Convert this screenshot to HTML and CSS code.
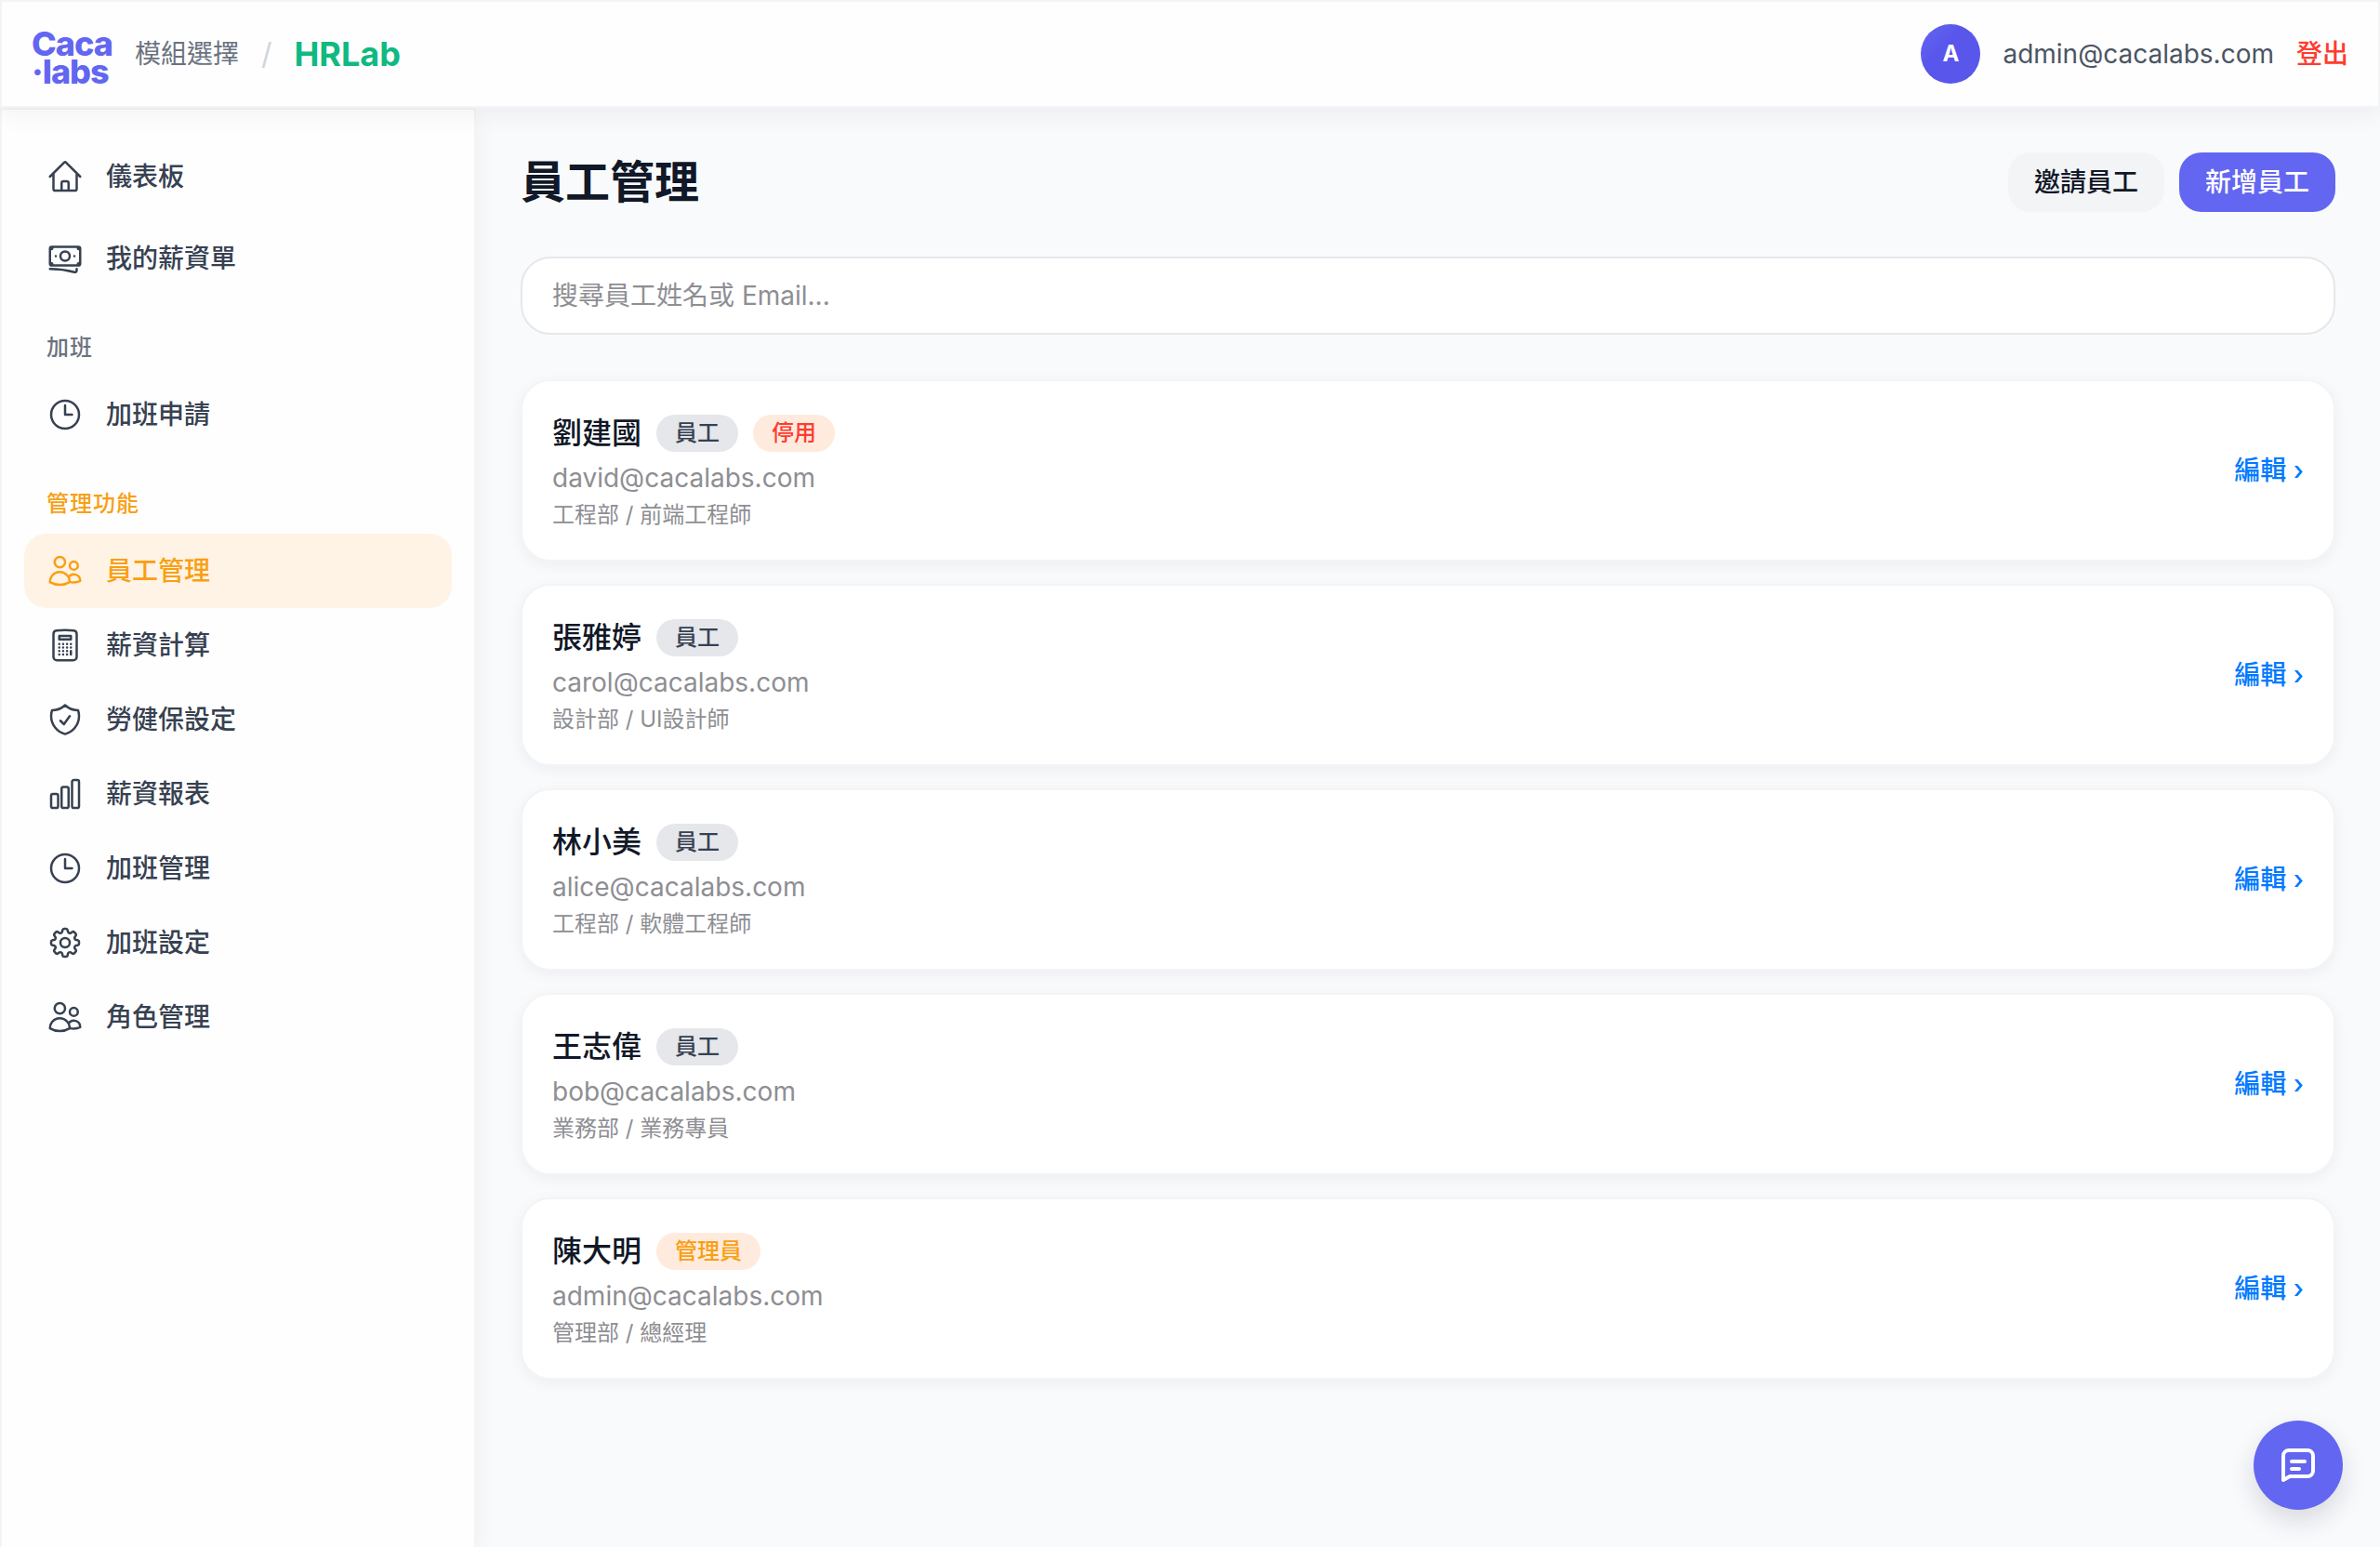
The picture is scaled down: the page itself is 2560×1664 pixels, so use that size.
FILE: index.html
```html
<!DOCTYPE html>
<html lang="zh-Hant">
<head>
<meta charset="utf-8">
<title>員工管理 - HRLab</title>
<link rel="stylesheet" href="styles.css">
</head>
<body>
<svg class="sprite" aria-hidden="true">
  <symbol id="home" viewBox="0 0 24 24"><path d="m2.25 12 8.954-8.955c.44-.439 1.152-.439 1.591 0L21.75 12M4.5 9.75v10.125c0 .621.504 1.125 1.125 1.125H9.75v-4.875c0-.621.504-1.125 1.125-1.125h2.25c.621 0 1.125.504 1.125 1.125V21h4.125c.621 0 1.125-.504 1.125-1.125V9.75M8.25 21h8.25"/></symbol>
  <symbol id="cash" viewBox="0 0 24 24"><path d="M2.25 18.75a60.07 60.07 0 0 1 15.797 2.101c.727.198 1.453-.342 1.453-1.096V18.75M3.75 4.5v.75A.75.75 0 0 1 3 6h-.75m0 0v-.375c0-.621.504-1.125 1.125-1.125H20.25M2.25 6v9m18-10.5v.75c0 .414.336.75.75.75h.75m-1.5-1.5h.375c.621 0 1.125.504 1.125 1.125v9.75c0 .621-.504 1.125-1.125 1.125h-.375m1.5-1.5H21a.75.75 0 0 0-.75.75v.75m0 0H3.75m0 0h-.375a1.125 1.125 0 0 1-1.125-1.125V15m1.5 1.5v-.75A.75.75 0 0 0 3 15h-.75M15 10.5a3 3 0 1 1-6 0 3 3 0 0 1 6 0Zm3 0h.008v.008H18V10.5Zm-12 0h.008v.008H6V10.5Z"/></symbol>
  <symbol id="clock" viewBox="0 0 24 24"><path d="M12 6v6h4.5m4.5 0a9 9 0 1 1-18 0 9 9 0 0 1 18 0Z"/></symbol>
  <symbol id="users" viewBox="0 0 24 24"><path d="M15 19.128a9.38 9.38 0 0 0 2.625.372 9.337 9.337 0 0 0 4.121-.952 4.125 4.125 0 0 0-7.533-2.493M15 19.128v-.003c0-1.113-.285-2.16-.786-3.07M15 19.128v.106A12.318 12.318 0 0 1 8.624 21c-2.331 0-4.512-.645-6.374-1.766l-.001-.109a6.375 6.375 0 0 1 11.964-3.07M12 6.375a3.375 3.375 0 1 1-6.75 0 3.375 3.375 0 0 1 6.75 0Zm8.25 2.25a2.625 2.625 0 1 1-5.25 0 2.625 2.625 0 0 1 5.25 0Z"/></symbol>
  <symbol id="calculator" viewBox="0 0 24 24"><path d="M15.75 15.75V18m-7.5-6.75h.008v.008H8.25v-.008Zm0 2.25h.008v.008H8.25V13.5Zm0 2.25h.008v.008H8.25v-.008Zm0 2.25h.008v.008H8.25V18Zm2.498-6.75h.007v.008h-.007v-.008Zm0 2.25h.007v.008h-.007V13.5Zm0 2.25h.007v.008h-.007v-.008Zm0 2.25h.007v.008h-.007V18Zm2.504-6.75h.008v.008h-.008v-.008Zm0 2.25h.008v.008h-.008V13.5Zm0 2.25h.008v.008h-.008v-.008Zm0 2.25h.008v.008h-.008V18Zm2.498-6.75h.008v.008h-.008v-.008Zm0 2.25h.008v.008h-.008V13.5ZM8.25 6h7.5v2.25h-7.5V6ZM12 2.25c-1.892 0-3.758.11-5.593.322C5.307 2.7 4.5 3.65 4.5 4.757V19.5a2.25 2.25 0 0 0 2.25 2.25h10.5a2.25 2.25 0 0 0 2.25-2.25V4.757c0-1.108-.806-2.057-1.907-2.185A48.507 48.507 0 0 0 12 2.25Z"/></symbol>
  <symbol id="shield" viewBox="0 0 24 24"><path d="M9 12.75 11.25 15 15 9.75m-3-7.036A11.959 11.959 0 0 1 3.598 6 11.99 11.99 0 0 0 3 9.749c0 5.592 3.824 10.29 9 11.623 5.176-1.332 9-6.03 9-11.622 0-1.31-.21-2.571-.598-3.751h-.152c-3.196 0-6.1-1.248-8.25-3.285Z"/></symbol>
  <symbol id="chart" viewBox="0 0 24 24"><path d="M3 13.125C3 12.504 3.504 12 4.125 12h2.25c.621 0 1.125.504 1.125 1.125v6.75C7.5 20.496 6.996 21 6.375 21h-2.25A1.125 1.125 0 0 1 3 19.875v-6.75ZM9.75 8.625c0-.621.504-1.125 1.125-1.125h2.25c.621 0 1.125.504 1.125 1.125v11.25c0 .621-.504 1.125-1.125 1.125h-2.25a1.125 1.125 0 0 1-1.125-1.125V8.625ZM16.5 4.125c0-.621.504-1.125 1.125-1.125h2.25C20.496 3 21 3.504 21 4.125v15.75c0 .621-.504 1.125-1.125 1.125h-2.25a1.125 1.125 0 0 1-1.125-1.125V4.125Z"/></symbol>
  <symbol id="gear" viewBox="0 0 24 24"><path d="M10.343 3.94c.09-.542.56-.94 1.11-.94h1.093c.55 0 1.02.398 1.11.94l.149.894c.07.424.384.764.78.93.398.164.855.142 1.205-.108l.737-.527a1.125 1.125 0 0 1 1.45.12l.773.774c.39.389.44 1.002.12 1.45l-.527.737c-.25.35-.272.806-.107 1.204.165.397.505.71.93.78l.893.15c.543.09.94.559.94 1.109v1.094c0 .55-.397 1.02-.94 1.11l-.894.149c-.424.07-.764.383-.929.78-.165.398-.143.854.107 1.204l.527.738c.32.447.269 1.06-.12 1.45l-.774.773a1.125 1.125 0 0 1-1.449.12l-.738-.527c-.35-.25-.806-.272-1.203-.107-.398.165-.71.505-.781.929l-.149.894c-.09.542-.56.94-1.11.94h-1.094c-.55 0-1.019-.398-1.11-.94l-.148-.894c-.071-.424-.384-.764-.781-.93-.398-.164-.854-.142-1.204.108l-.738.527c-.447.32-1.06.269-1.45-.12l-.773-.774a1.125 1.125 0 0 1-.12-1.45l.527-.737c.25-.35.272-.806.108-1.204-.165-.397-.506-.71-.93-.78l-.894-.15c-.542-.09-.94-.56-.94-1.109v-1.094c0-.55.398-1.02.94-1.11l.894-.149c.424-.07.765-.383.93-.78.165-.398.143-.854-.108-1.204l-.526-.738a1.125 1.125 0 0 1 .12-1.45l.773-.773a1.125 1.125 0 0 1 1.45-.12l.737.527c.35.25.807.272 1.204.107.397-.165.71-.505.78-.929l.15-.894Z"/><path d="M15 12a3 3 0 1 1-6 0 3 3 0 0 1 6 0Z"/></symbol>
</svg>

<header class="topbar">
  <a class="logo" href="#">Caca<br>·labs</a>
  <nav class="crumbs">
    <a class="crumb-link" href="#">模組選擇</a>
    <span class="crumb-sep">/</span>
    <span class="crumb-app">HRLab</span>
  </nav>
  <div class="account">
    <span class="avatar">A</span>
    <span class="account-mail">admin@cacalabs.com</span>
    <button class="logout" type="button">登出</button>
  </div>
</header>

<div class="shell">
  <aside class="sidebar">
    <nav class="nav-group nav-top">
      <a class="nav-item" href="#"><svg class="icon"><use href="#home"/></svg>儀表板</a>
      <a class="nav-item" href="#"><svg class="icon"><use href="#cash"/></svg>我的薪資單</a>
    </nav>
    <h2 class="nav-title">加班</h2>
    <nav class="nav-group">
      <a class="nav-item" href="#"><svg class="icon"><use href="#clock"/></svg>加班申請</a>
    </nav>
    <h2 class="nav-title nav-title-admin">管理功能</h2>
    <nav class="nav-group">
      <a class="nav-item active" href="#" aria-current="page"><svg class="icon"><use href="#users"/></svg>員工管理</a>
      <a class="nav-item" href="#"><svg class="icon"><use href="#calculator"/></svg>薪資計算</a>
      <a class="nav-item" href="#"><svg class="icon"><use href="#shield"/></svg>勞健保設定</a>
      <a class="nav-item" href="#"><svg class="icon"><use href="#chart"/></svg>薪資報表</a>
      <a class="nav-item" href="#"><svg class="icon"><use href="#clock"/></svg>加班管理</a>
      <a class="nav-item" href="#"><svg class="icon"><use href="#gear"/></svg>加班設定</a>
      <a class="nav-item" href="#"><svg class="icon"><use href="#users"/></svg>角色管理</a>
    </nav>
  </aside>

  <main class="content">
    <div class="page-head">
      <h1 class="page-title">員工管理</h1>
      <div class="actions">
        <button class="btn" type="button">邀請員工</button>
        <button class="btn btn-primary" type="button">新增員工</button>
      </div>
    </div>

    <input class="search" type="search" placeholder="搜尋員工姓名或 Email..." aria-label="搜尋員工姓名或 Email">

    <ul class="cards">
      <li class="card">
        <div class="person">
          <div class="name-row"><h3 class="name">劉建國</h3><span class="tag">員工</span><span class="tag tag-off">停用</span></div>
          <p class="mail">david@cacalabs.com</p>
          <p class="role">工程部 / 前端工程師</p>
        </div>
        <a class="edit" href="#">編輯 ›</a>
      </li>
      <li class="card">
        <div class="person">
          <div class="name-row"><h3 class="name">張雅婷</h3><span class="tag">員工</span></div>
          <p class="mail">carol@cacalabs.com</p>
          <p class="role">設計部 / UI設計師</p>
        </div>
        <a class="edit" href="#">編輯 ›</a>
      </li>
      <li class="card">
        <div class="person">
          <div class="name-row"><h3 class="name">林小美</h3><span class="tag">員工</span></div>
          <p class="mail">alice@cacalabs.com</p>
          <p class="role">工程部 / 軟體工程師</p>
        </div>
        <a class="edit" href="#">編輯 ›</a>
      </li>
      <li class="card">
        <div class="person">
          <div class="name-row"><h3 class="name">王志偉</h3><span class="tag">員工</span></div>
          <p class="mail">bob@cacalabs.com</p>
          <p class="role">業務部 / 業務專員</p>
        </div>
        <a class="edit" href="#">編輯 ›</a>
      </li>
      <li class="card">
        <div class="person">
          <div class="name-row"><h3 class="name">陳大明</h3><span class="tag tag-admin">管理員</span></div>
          <p class="mail">admin@cacalabs.com</p>
          <p class="role">管理部 / 總經理</p>
        </div>
        <a class="edit" href="#">編輯 ›</a>
      </li>
    </ul>
  </main>
</div>

<button class="chat" type="button" aria-label="意見回饋">
  <svg class="chat-icon" viewBox="0 0 48 48"><path d="M14 8h20a6 6 0 0 1 6 6v16a6 6 0 0 1-6 6H15l-7 4V14a6 6 0 0 1 6-6ZM17 20h14M17 28h8"/></svg>
</button>
</body>
</html>
```
FILE: styles.css
```css
* { box-sizing: border-box; }

body {
  margin: 0;
  min-height: 100vh;
  display: flex;
  flex-direction: column;
  background: #f9fafc;
  color: #111827;
  font-family: Inter, "Noto Sans CJK TC", sans-serif;
  font-size: 28px;
  line-height: 40px;
}

h1, h2, h3, p, ul { margin: 0; padding: 0; }
ul { list-style: none; }
a { color: inherit; text-decoration: none; }
button, input { font: inherit; color: inherit; }
button { border: 0; background: none; cursor: pointer; }

.sprite { position: absolute; width: 0; height: 0; }

.icon {
  flex: none;
  width: 40px;
  height: 40px;
  fill: none;
  stroke: currentColor;
  stroke-width: 1.5;
  stroke-linecap: round;
  stroke-linejoin: round;
}

/* Top bar */
.topbar {
  position: relative;
  z-index: 2;
  display: flex;
  align-items: center;
  min-height: 116px;
  padding: 0 32px;
  border: 2px solid #f3f4f6;
  background: #fefefe;
  box-shadow: 0 8px 24px rgba(17, 24, 39, 0.05);
}

.logo {
  margin-right: 24px;
  padding-top: 8px;
  color: #6366f1;
  font-size: 36px;
  font-weight: 800;
  letter-spacing: -1px;
  line-height: 30px;
}

.crumbs {
  display: flex;
  align-items: center;
  gap: 24px;
}
.crumb-link { color: #6b7280; }
.crumb-sep { color: #d1d5db; font-size: 32px; }
.crumb-app { color: #10b981; font-size: 36px; font-weight: 700; }

.account {
  display: flex;
  align-items: center;
  gap: 24px;
  margin-left: auto;
}
.avatar {
  width: 64px;
  height: 64px;
  border-radius: 50%;
  background: linear-gradient(135deg, #6366f1, #5856eb 40%);
  color: #fff;
  font-size: 24px;
  font-weight: 700;
  line-height: 64px;
  text-align: center;
}
.account-mail { color: #4b5563; }
.logout { padding: 0; color: #ff3b30; font-weight: 500; }

/* Layout */
.shell {
  flex: 1;
  display: flex;
}

.sidebar {
  flex: none;
  width: 512px;
  padding: 32px 24px;
  border: solid #f3f4f6;
  border-width: 2px 2px 0;
  background: #fefefe;
  box-shadow: 0 8px 24px rgba(17, 24, 39, 0.05);
}

.nav-group {
  display: flex;
  flex-direction: column;
}
.nav-top { gap: 8px; }

.nav-item {
  display: flex;
  align-items: center;
  gap: 24px;
  padding: 20px 24px;
  border-radius: 24px;
  color: #374151;
  font-weight: 500;
}
.nav-item.active { background: #fef3e5; color: #f99f13; }

.nav-title {
  padding: 40px 24px 16px;
  color: #6b7280;
  font-size: 24px;
  font-weight: 500;
  letter-spacing: 1px;
  line-height: 32px;
}
.nav-title-admin { color: #f99f13; }

.content {
  flex: 1;
  min-width: 0;
  padding: 48px;
}

.page-head {
  display: flex;
  align-items: center;
  justify-content: space-between;
  margin-bottom: 48px;
}
.page-title { font-size: 48px; font-weight: 700; line-height: 64px; }

.actions { display: flex; gap: 16px; }
.btn {
  padding: 12px 28px;
  border-radius: 24px;
  background: #f3f4f6;
  font-weight: 500;
}
.btn-primary { background: #6366f1; color: #fff; }

.search {
  display: block;
  width: 100%;
  padding: 20px 32px;
  border: 2px solid #e5e7eb;
  border-radius: 32px;
  outline: 0;
  background: #fff;
  appearance: none;
}
.search::placeholder { color: #8e8e93; opacity: 1; }

/* Employee cards */
.cards {
  display: flex;
  flex-direction: column;
  gap: 24px;
  margin-top: 48px;
}
.card {
  display: flex;
  align-items: center;
  justify-content: space-between;
  padding: 32px;
  border: 2px solid #f3f4f6;
  border-radius: 32px;
  background: #fff;
  box-shadow: 0 4px 16px rgba(17, 24, 39, 0.05);
}
.name-row {
  display: flex;
  align-items: center;
  gap: 16px;
  height: 48px;
}
.name { font-size: 32px; font-weight: 500; }
.tag {
  padding: 0 20px;
  border-radius: 20px;
  background: #e5e7eb;
  color: #374151;
  font-size: 24px;
  font-weight: 500;
}
.tag-off { background: #ffebde; color: #ff3b30; }
.tag-admin { background: #ffebde; color: #f99f13; }
.mail { margin-top: 4px; color: #8e8e93; }
.role { margin-top: 4px; color: #8e8e93; font-size: 24px; line-height: 32px; }
.edit { color: #007aff; font-weight: 500; }

.chat {
  position: fixed;
  right: 40px;
  bottom: 40px;
  display: flex;
  align-items: center;
  justify-content: center;
  width: 96px;
  height: 96px;
  padding: 0;
  border-radius: 50%;
  background: #6366f1;
  box-shadow: 0 12px 28px rgba(17, 24, 39, 0.14);
}
.chat-icon {
  width: 48px;
  height: 48px;
  fill: none;
  stroke: #fff;
  stroke-width: 4;
  stroke-linecap: round;
  stroke-linejoin: round;
}
```
